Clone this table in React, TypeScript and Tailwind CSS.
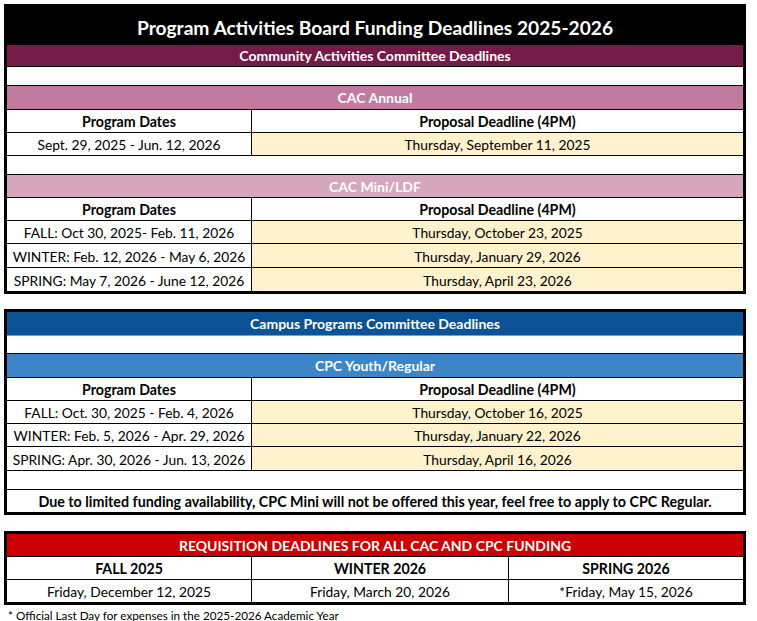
import React from "react";

const font = { fontFamily: "Lato, 'Open Sans', sans-serif" };

function Band({ text, className, h }: { text: string; className: string; h: string }) {
  return (
    <div className={`flex items-center justify-center pt-px leading-[16px] text-white font-bold text-[14px] border-b border-black ${h} ${className}`}>
      {text}
    </div>
  );
}

function Spacer({ h }: { h: string }) {
  return <div className={`bg-white border-b border-black ${h}`} />;
}

function HeadRow() {
  return (
    <div className="grid grid-cols-[245px_1fr] h-[23px] border-b border-black font-bold text-[14.2px] leading-[16px]">
      <div className="flex items-center justify-center pt-px border-r border-black">Program Dates</div>
      <div className="flex items-center justify-center pt-px">Proposal Deadline (4PM)</div>
    </div>
  );
}

function DataRow({ left, right, last, h = "h-[23px]" }: { left: string; right: string; last?: boolean; h?: string }) {
  return (
    <div className={`grid grid-cols-[245px_1fr] text-[13.8px] leading-[16px] ${h} ${last ? "" : "border-b border-black"}`}>
      <div className="flex items-center justify-center pt-[2px] border-r border-black bg-white">{left}</div>
      <div className="flex items-center justify-center pt-[2px] bg-[#fff2cc]">{right}</div>
    </div>
  );
}

export default function App() {
  return (
    <div className="w-[757px] h-[621px] bg-white text-black overflow-hidden pt-[4px] pl-[4px]" style={font}>
      <div className="w-[742px] border-[3px] border-black">
        <div className="h-[38px] bg-black text-white font-bold text-[19.2px] leading-[24px] flex items-center justify-center pt-[3px]">
          Program Activities Board Funding Deadlines 2025-2026
        </div>
        <Band text="Community Activities Committee Deadlines" className="bg-[#741b47]" h="h-[22px]" />
        <Spacer h="h-[19px]" />
        <Band text="CAC Annual" className="bg-[#c27ba0]" h="h-[24px]" />
        <HeadRow />
        <DataRow left="Sept. 29, 2025 - Jun. 12, 2026" right="Thursday, September 11, 2025" />
        <Spacer h="h-[19px]" />
        <Band text="CAC Mini/LDF" className="bg-[#d5a6bd]" h="h-[23px]" />
        <HeadRow />
        <DataRow left="FALL: Oct 30, 2025- Feb. 11, 2026" right="Thursday, October 23, 2025" />
        <DataRow left="WINTER: Feb. 12, 2026 - May 6, 2026" right="Thursday, January 29, 2026" h="h-[24px]" />
        <DataRow left="SPRING: May 7, 2026 - June 12, 2026" right="Thursday, April 23, 2026" last />
      </div>

      <div className="w-[742px] border-[3px] border-black mt-[15px]">
        <Band text="Campus Programs Committee Deadlines" className="bg-[#0b5394] !border-[#6d9eeb]" h="h-[24px]" />
        <Spacer h="h-[18px]" />
        <Band text="CPC Youth/Regular" className="bg-[#3d85c6]" h="h-[24px]" />
        <HeadRow />
        <DataRow left="FALL: Oct. 30, 2025 - Feb. 4, 2026" right="Thursday, October 16, 2025" />
        <DataRow left="WINTER: Feb. 5, 2026 - Apr. 29, 2026" right="Thursday, January 22, 2026" />
        <DataRow left="SPRING: Apr. 30, 2026 - Jun. 13, 2026" right="Thursday, April 16, 2026" h="h-[24px]" />
        <Spacer h="h-[19px]" />
        <div className="h-[22px] flex items-center justify-center pt-px leading-[16px] font-bold text-[14.3px]">
          Due to limited funding availability, CPC Mini will not be offered this year, feel free to apply to CPC Regular.
        </div>
      </div>

      <div className="w-[742px] border-[3px] border-black mt-[16px]">
        <Band text="REQUISITION DEADLINES FOR ALL CAC AND CPC FUNDING" className="bg-[#cc0000]" h="h-[23px]" />
        <div className="grid grid-cols-[245px_257px_1fr] h-[23px] border-b border-black font-bold text-[14.2px] leading-[16px]">
          <div className="flex items-center justify-center pt-px border-r border-black">FALL 2025</div>
          <div className="flex items-center justify-center pt-px border-r border-black">WINTER 2026</div>
          <div className="flex items-center justify-center pt-px">SPRING 2026</div>
        </div>
        <div className="grid grid-cols-[245px_257px_1fr] h-[22px] text-[13.8px] leading-[16px]">
          <div className="flex items-center justify-center pt-[2px] border-r border-black">Friday, December 12, 2025</div>
          <div className="flex items-center justify-center pt-[2px] border-r border-black">Friday, March 20, 2026</div>
          <div className="flex items-center justify-center pt-[2px]">*Friday, May 15, 2026</div>
        </div>
      </div>

      <div className="text-[11.7px] leading-[14px] mt-[3px] pl-[4px]">
        * Official Last Day for expenses in the 2025-2026 Academic Year
      </div>
    </div>
  );
}
